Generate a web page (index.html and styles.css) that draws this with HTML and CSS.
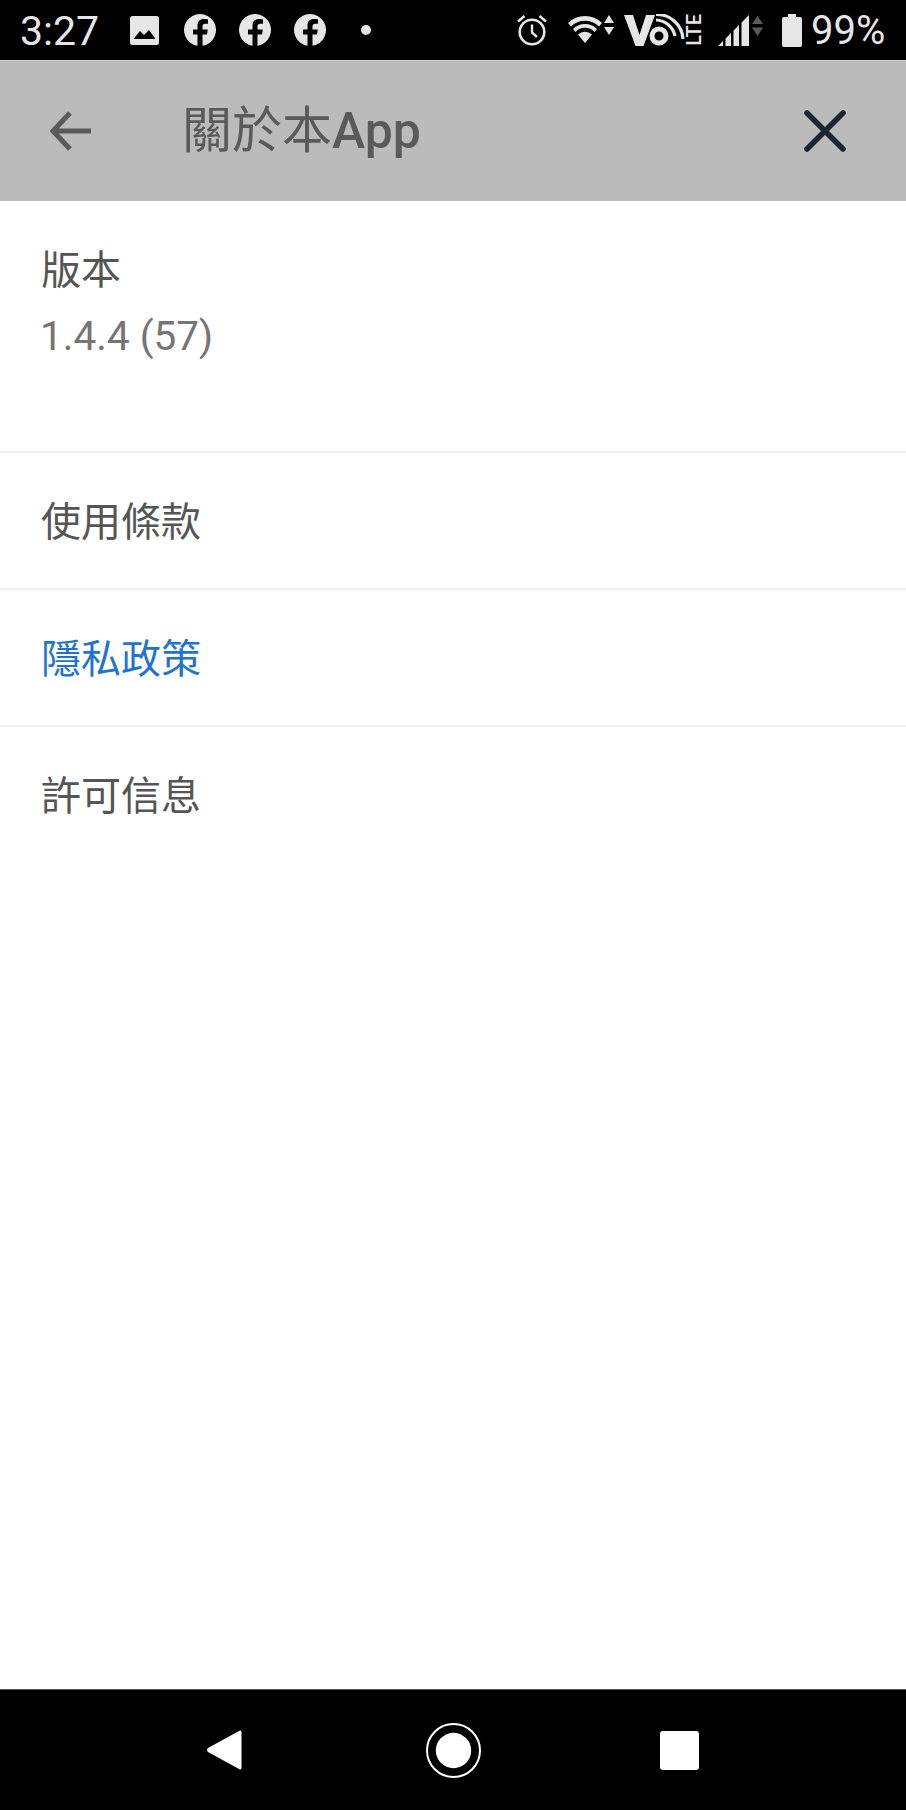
FILE: index.html
```html
<!DOCTYPE html>
<html lang="zh-Hant">
<head>
    <meta charset="UTF-8">
    <meta name="viewport" content="width=device-width, initial-scale=1.0">
    <title>關於本App</title>
    <link rel="stylesheet" href="styles.css">
</head>
<body>
    <!--狀態列-->
    <div class="status">
        <span class="time">3:27</span>
        <div class="status-left">
            <svg class="ic-pic" width="29" height="29" viewBox="0 0 29 29"><rect width="29" height="29" rx="2.5" fill="#e6e6e6"/><path d="M3.500 23 L10 15 L14 19 L19 14 L25.500 23Z" fill="#000"/></svg>
            <svg class="ic-fb" width="32" height="32" viewBox="0 0 32 32"><path d="M13.5 31.8 A16 16 0 1 1 18.5 31.8 V20.5 H23 L23.8 15.5 H18.5 V12.4 C18.5 10.8 19.4 9.7 21.2 9.7 H24 V5.4 C22.8 5.2 21.4 5 20 5 C15.8 5 13.5 7.6 13.5 11.7 V15.5 H9 V20.5 H13.5Z" fill="#e6e6e6"/></svg>
            <svg class="ic-fb" width="32" height="32" viewBox="0 0 32 32"><path d="M13.5 31.8 A16 16 0 1 1 18.5 31.8 V20.5 H23 L23.8 15.5 H18.5 V12.4 C18.5 10.8 19.4 9.7 21.2 9.7 H24 V5.4 C22.8 5.2 21.4 5 20 5 C15.8 5 13.5 7.6 13.5 11.7 V15.5 H9 V20.5 H13.5Z" fill="#e6e6e6"/></svg>
            <svg class="ic-fb" width="32" height="32" viewBox="0 0 32 32"><path d="M13.5 31.8 A16 16 0 1 1 18.5 31.8 V20.5 H23 L23.8 15.5 H18.5 V12.4 C18.5 10.8 19.4 9.7 21.2 9.7 H24 V5.4 C22.8 5.2 21.4 5 20 5 C15.8 5 13.5 7.6 13.5 11.7 V15.5 H9 V20.5 H13.5Z" fill="#e6e6e6"/></svg>
            <span class="dot"></span>
        </div>
        <div class="status-right">
            <!--鬧鐘-->
            <svg class="ic-alarm" width="30" height="32" viewBox="0 0 30 32"><circle cx="15" cy="18" r="12.3" fill="none" stroke="#e6e6e6" stroke-width="2.6"/><path d="M15 10.5 V18.5 L20 23" fill="none" stroke="#e6e6e6" stroke-width="2.4"/><path d="M1 7.5 L7.5 2 M29 7.5 L22.5 2" stroke="#e6e6e6" stroke-width="2.6"/></svg>
            <!--wifi-->
            <svg class="ic-wifi" width="46" height="30" viewBox="0 0 46 30"><path d="M0 9 A24 24 0 0 1 34 9 L31 12.5 A20 20 0 0 0 3 12.5Z M5 15 A17 17 0 0 1 29 15 L26.5 18 A13 13 0 0 0 7.5 18Z M10 20.5 A10 10 0 0 1 24 20.5 L17 29Z" fill="#e6e6e6"/><path d="M36 9 L41 1 L46 9Z M36 13 L46 13 L41 21Z" fill="#e6e6e6"/></svg>
            <!--VoLTE-->
            <svg class="ic-vo" width="61" height="33" viewBox="0 0 61 33"><path d="M0 1 H9 L15.5 21 L22 1 H31 L19.5 32 H11.5Z" fill="#e6e6e6"/><circle cx="35" cy="22" r="7" fill="none" stroke="#e6e6e6" stroke-width="5"/><path d="M32 6 A20 20 0 0 1 51 22 M32 0.5 A26 26 0 0 1 59 25" fill="none" stroke="#e6e6e6" stroke-width="3.2"/></svg>
            <span class="lte">LTE</span>
            <!--訊號-->
            <svg class="ic-signal" width="45" height="33" viewBox="0 0 45 33"><path d="M0 32 L5 27 V32Z M7.5 24.5 L13 19 V32 H7.5Z M15.5 16.5 L21 11 V32 H15.5Z M23.5 8.5 L31 1 V32 H23.5Z" fill="#e6e6e6"/><path d="M34 10 L39.5 2 L45 10Z M34 13.5 H45 L39.5 22Z" fill="#5a5a5a"/></svg>
            <!--電池-->
            <svg class="ic-bat" width="20" height="33" viewBox="0 0 20 33"><path d="M6 0 H14 V3 H18 A2 2 0 0 1 20 5 V31 A2 2 0 0 1 18 33 H2 A2 2 0 0 1 0 31 V5 A2 2 0 0 1 2 3 H6Z" fill="#e6e6e6"/></svg>
            <span class="pct">99%</span>
        </div>
    </div>

    <!--標題列-->
    <div class="header">
        <svg class="back" width="42" height="40" viewBox="0 0 42 40"><path d="M41 20 H4 M20 2 L3 20 L20 38" fill="none" stroke="#5a5a5a" stroke-width="5"/></svg>
        <h1 class="title">關於本<b>App</b></h1>
        <svg class="close" width="42" height="42" viewBox="0 0 42 42"><path d="M3 3 L39 39 M39 3 L3 39" fill="none" stroke="#1f2530" stroke-width="5.6" stroke-linecap="round"/></svg>
    </div>

    <!--內容-->
    <ul class="list">
        <li class="row row-ver">
            <div>版本</div>
            <div class="ver">1.4.4 (57)</div>
        </li>
        <li class="row">使用條款</li>
        <li class="row link">隱私政策</li>
        <li class="row last">許可信息</li>
    </ul>

    <!--導航列-->
    <div class="nav">
        <svg width="36" height="42" viewBox="0 0 36 42"><path d="M33 2 Q35 0.500 35.500 3 V39 Q35 41.500 33 40 L2 23 Q0 21 2 19Z" fill="#fff"/></svg>
        <svg width="55" height="55" viewBox="0 0 55 55"><circle cx="27.500" cy="27.500" r="26.500" fill="none" stroke="#fff" stroke-width="2"/><circle cx="27.500" cy="27.500" r="17.700" fill="#fff"/></svg>
        <svg width="39" height="39" viewBox="0 0 39 39"><rect width="39" height="39" rx="3" fill="#fff"/></svg>
    </div>
</body>
</html>
```

FILE: styles.css
```css
*{
    margin:0;
    padding:0;
    box-sizing:border-box;
}
body{
    width:906px;
    height:1810px;
    display:flex;
    flex-direction:column;
    background-color:#fff;
    font-family:Roboto,"Noto Sans CJK TC",sans-serif;
    color:#555;
    overflow:hidden;
}
/*狀態列*/
.status{
    height:60px;
    background-color:#000;
    color:#e6e6e6;
    display:flex;
    align-items:center;
    padding-left:20px;
    flex-shrink:0;
}
.time{
    font-size:41px;
    width:110px;
    line-height:60px;
    padding-top:2px;
}
.status-left{
    display:flex;
    align-items:center;
    width:241px;
}
.ic-fb{
    margin-left:23px;
}
.ic-pic + .ic-fb{
    margin-left:25px;
}
.dot{
    width:10px;
    height:10px;
    border-radius:50%;
    background-color:#e6e6e6;
    margin-left:35px;
}
.status-right{
    display:flex;
    align-items:center;
    margin-left:146px;
}
.ic-wifi{
    margin-left:21px;
    margin-top:-3px;
}
.ic-vo{
    margin-left:10px;
}
.lte{
    writing-mode:vertical-rl;
    transform:rotate(180deg);
    font-size:20px;
    line-height:15px;
    font-weight:500;
    width:15px;
    margin-left:2px;
}
.ic-signal{
    margin-left:16px;
}
.ic-bat{
    margin-left:19px;
}
.pct{
    font-size:40px;
    line-height:60px;
    margin-left:9px;
    padding-top:2px;
}
/*標題列*/
.header{
    height:141px;
    background-color:#bbb;
    border-top:1px solid #ccc;
    display:flex;
    align-items:center;
    padding-left:50px;
    flex-shrink:0;
}
.title{
    font-size:50px;
    font-weight:400;
    color:#5a5a5a;
    margin-left:90px;
    line-height:60px;
}
.title b{
    font-weight:500;
}
.close{
    margin-left:auto;
    margin-right:60px;
}
/*內容*/
.list{
    list-style:none;
    flex:1;
}
.row{
    height:137px;
    font-size:40px;
    line-height:66px;
    padding:37px 41px 0;
    border-bottom:2px solid #f0f0f0;
    color:#555;
}
.row-ver{
    height:252px;
}
.ver{
    color:#757575;
    font-size:40.5px;
    margin:-1px 0 0 -1px;
}
.link{
    color:#1f74cf;
}
.last{
    border-bottom:none;
}
/*導航列*/
.nav{
    height:121px;
    background-color:#000;
    border-top:1px solid #555;
    display:flex;
    align-items:center;
    padding-left:206px;
    flex-shrink:0;
}
.nav svg:nth-child(2){
    margin-left:184px;
}
.nav svg:nth-child(3){
    margin-left:179px;
}
```
